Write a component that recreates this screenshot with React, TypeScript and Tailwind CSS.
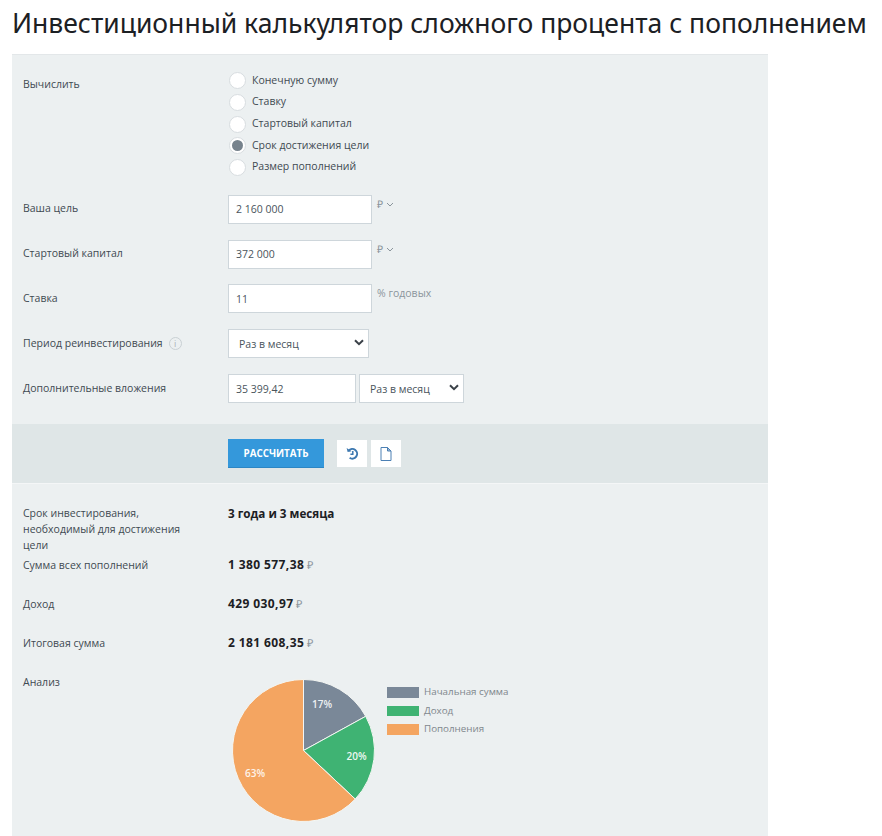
const Row = ({ label, children, className = "" }: { label: React.ReactNode; children: React.ReactNode; className?: string }) => (
  <div className={`flex ${className}`}>
    <div className="w-[216px] shrink-0 pl-[11px] pr-[40px] text-[#3f4a52]">{label}</div>
    <div className="flex-1 flex items-start">{children}</div>
  </div>
);

const Radio = ({ text, checked, h }: { text: string; checked?: boolean; h: string }) => (
  <div className={`flex items-center ${h}`}>
    <span className="w-[17px] h-[17px] ml-[1px] rounded-full bg-white border border-[#d8dde0] flex items-center justify-center">
      {checked && <span className="w-[11px] h-[11px] rounded-full bg-[#76828c]" />}
    </span>
    <span className="ml-[6px] text-[#3f4a52] relative -top-[1px]">{text}</span>
  </div>
);

const Input = ({ value, w = "w-[144px]", pb = "pb-[2px]" }: { value: string; w?: string; pb?: string }) => (
  <div className={`${w} ${pb} h-[29px] shrink-0 bg-white border border-[#ced6db] pl-[7px] flex items-center text-[#4a545c]`}>{value}</div>
);

const Select = ({ w, pl }: { w: string; pl: string }) => (
  <div className={`${w} ${pl} h-[29px] shrink-0 bg-white border border-[#ced6db] flex items-center justify-between pr-[4px] text-[#4a545c]`}>
    <span>Раз в месяц</span>
    <svg width="10" height="7" viewBox="0 0 10 7" className="relative -top-[1px] mr-[0.5px]"><path d="M1 1.2 5 5.2 9 1.2" fill="none" stroke="#3a4148" strokeWidth="2" /></svg>
  </div>
);

const Cur = () => (
  <span className="ml-[5px] mt-[1px] flex items-center text-[#8b959c]">
    ₽
    <svg width="8" height="5" viewBox="0 0 8 5" className="ml-[3px]"><path d="M1 1 4 4 7 1" fill="none" stroke="#8b959c" strokeWidth="1" /></svg>
  </span>
);

const Rub = () => <span className="ml-[3px] font-normal text-[11px] tracking-normal text-[#8b959c]">₽</span>;

const pt = (pct: number, r = 71) => {
  const a = pct * 2 * Math.PI;
  return `${(71.5 + r * Math.sin(a)).toFixed(2)} ${(71.5 - r * Math.cos(a)).toFixed(2)}`;
};

const Pie = () => (
  <svg width="143" height="143" viewBox="0 0 143 143" className="shrink-0">
    <path d={`M71.5 71.5L${pt(0)}A71 71 0 0 1 ${pt(0.17)}Z`} fill="#7a8898" stroke="#f4f6f3" strokeWidth="1" />
    <path d={`M71.5 71.5L${pt(0.17)}A71 71 0 0 1 ${pt(0.37)}Z`} fill="#3fb373" stroke="#f4f6f3" strokeWidth="1" />
    <path d={`M71.5 71.5L${pt(0.37)}A71 71 0 1 1 ${pt(1)}Z`} fill="#f4a561" stroke="#f4f6f3" strokeWidth="1" />
    <text x="90" y="29" textAnchor="middle" fontSize="10" fontWeight="600" fill="#eef1f3">17%</text>
    <text x="124.5" y="81" textAnchor="middle" fontSize="10" fontWeight="600" fill="#eef8f2">20%</text>
    <text x="23" y="98" textAnchor="middle" fontSize="10" fontWeight="600" fill="#fdf3ea">63%</text>
  </svg>
);

const Legend = ({ color, text }: { color: string; text: string }) => (
  <div className="flex items-center h-[18.5px]">
    <span className={`w-[32px] h-[10.5px] ${color}`} />
    <span className="ml-[5px] text-[9.8px] text-[#7f878d]">{text}</span>
  </div>
);

export default function App() {
  return (
    <div className="w-[882px] h-[836px] overflow-hidden bg-white font-['Open_Sans',sans-serif] text-[10.5px] leading-[16px]">
      <h1 className="h-[54px] pl-[12px] pt-[5px] text-[26.5px] leading-[36px] font-normal text-[#1c2024] font-['Noto_Sans','Open_Sans',sans-serif] whitespace-nowrap">
        Инвестиционный калькулятор сложного процента с пополнением
      </h1>
      <div className="ml-[12px] w-[756px] bg-[#ecf0f1] h-[782px] border-t border-[#e3e7e9]">
        <div className="pt-[15px]">
          <Row label={<div className="mt-[6px]">Вычислить</div>}>
            <div>
              <Radio text="Конечную сумму" h="h-[21px]" />
              <Radio text="Ставку" h="h-[22px]" />
              <Radio text="Стартовый капитал" h="h-[22px]" />
              <Radio text="Срок достижения цели" checked h="h-[21px]" />
              <Radio text="Размер пополнений" h="h-[22px]" />
            </div>
          </Row>
          <Row label={<div className="mt-[5px]">Ваша цель</div>} className="mt-[17px]">
            <Input value="2 160 000" />
            <Cur />
          </Row>
          <Row label={<div className="mt-[5px]">Стартовый капитал</div>} className="mt-[16px]">
            <Input value="372 000" />
            <Cur />
          </Row>
          <Row label={<div className="mt-[6px]">Ставка</div>} className="mt-[15px]">
            <Input value="11" pb="pb-0" />
            <span className="ml-[5px] mt-[1px] text-[#8b959c]">% годовых</span>
          </Row>
          <Row
            label={
              <div className="mt-[6px] flex items-center whitespace-nowrap">
                Период реинвестирования
                <span className="ml-[6px] w-[13px] h-[13px] rounded-full border border-[#c9d0d4] text-[9px] leading-none text-[#aab3b8] flex items-center justify-center">i</span>
              </div>
            }
            className="mt-[16px]"
          >
            <Select w="w-[141px]" pl="pl-[10px]" />
          </Row>
          <Row label={<div className="mt-[6px]">Дополнительные вложения</div>} className="mt-[16px]">
            <Input value="35 399,42" w="w-[128px]" pb="pb-0" />
            <div className="ml-[3px]">
              <Select w="w-[105px]" pl="pl-[10px]" />
            </div>
          </Row>
        </div>

        <div className="mt-[21px] h-[60px] bg-[#dfe6e7] border-b border-[#f4f6f7] flex items-center pl-[216px]">
          <div className="w-[96px] h-[29px] pt-[2px] bg-[#3498db] border-b border-[#2c86c4] text-white font-bold text-[9.8px] flex items-center justify-center">РАССЧИТАТЬ</div>
          <div className="ml-[13px] w-[30px] h-[27px] bg-white flex items-center justify-center">
            <svg width="13" height="13" viewBox="0 0 13 13" fill="none" stroke="#3d78b0" strokeWidth="2">
              <path d="M2.6 3.8A4.8 4.8 0 1 1 3.6 10.8" />
              <path d="M0.6 1 1.6 5 5.6 4.2Z" fill="#3d78b0" stroke="none" />
              <path d="M6.8 4v3.2H4.4" strokeWidth="1.5" />
            </svg>
          </div>
          <div className="ml-[4px] w-[30px] h-[27px] bg-white flex items-center justify-center">
            <svg width="12" height="14" viewBox="0 0 12 14" fill="none" stroke="#4c80b4" strokeWidth="1">
              <path d="M1 .5H7.5L11 4V13.5H1Z" />
              <path d="M7.5 .5V4H11L7.5 .5Z" fill="#9fbbd6" />
            </svg>
          </div>
        </div>

        <div className="pt-[21px]">
          <Row label={<div className="leading-[16px]">Срок инвестирования, необходимый для достижения цели</div>}>
            <span className="font-bold text-[11.7px] leading-[16px] text-[#1c2024]">3 года и 3 месяца</span>
          </Row>
          <Row label="Сумма всех пополнений" className="mt-[4px]">
            <span className="font-bold text-[12px] tracking-[0.4px] leading-[16px] text-[#1c2024] flex items-center">1 380 577,38<Rub /></span>
          </Row>
          <Row label="Доход" className="mt-[23px]">
            <span className="font-bold text-[12px] tracking-[0.4px] leading-[16px] text-[#1c2024] flex items-center">429 030,97<Rub /></span>
          </Row>
          <Row label="Итоговая сумма" className="mt-[23px]">
            <span className="font-bold text-[12px] tracking-[0.4px] leading-[16px] text-[#1c2024] flex items-center">2 181 608,35<Rub /></span>
          </Row>
          <Row label="Анализ" className="mt-[23px]">
            <div className="flex items-start mt-[5px] ml-[4px]">
              <Pie />
              <div className="ml-[12px] mt-[4px]">
                <Legend color="bg-[#7a8898]" text="Начальная сумма" />
                <Legend color="bg-[#3fb373]" text="Доход" />
                <Legend color="bg-[#f4a561]" text="Пополнения" />
              </div>
            </div>
          </Row>
        </div>
      </div>
    </div>
  );
}
